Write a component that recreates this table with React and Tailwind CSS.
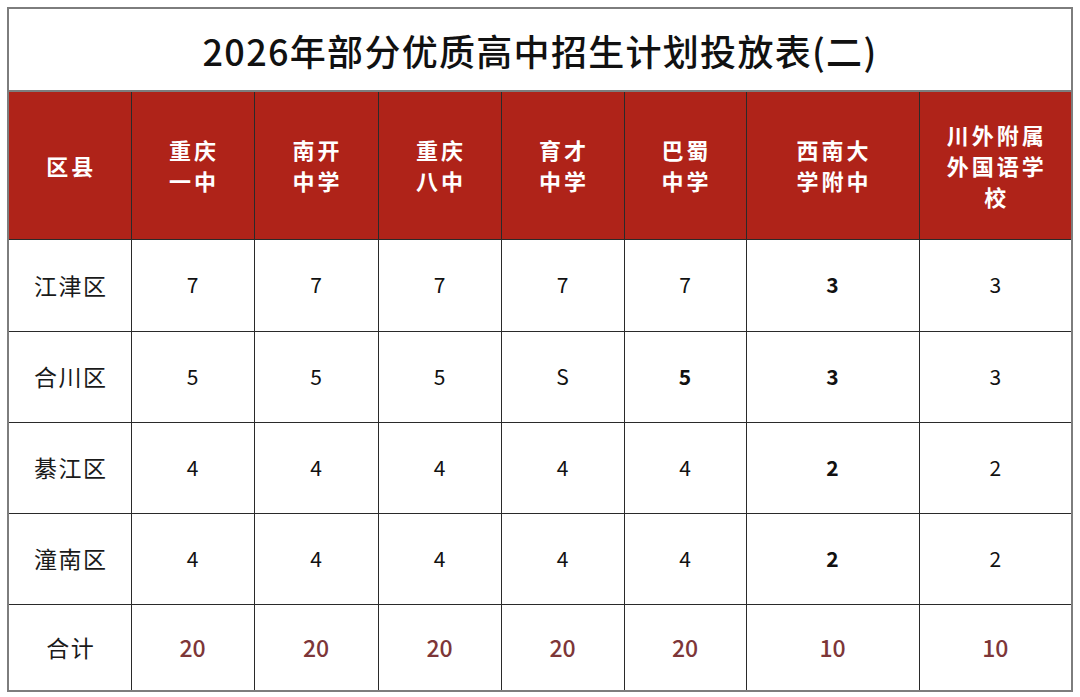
const cols = ['w-[123px]', 'w-[123px]', 'w-[124px]', 'w-[123px]', 'w-[123px]', 'w-[122px]', 'w-[173px]', 'w-[153px]'];

const heads = [
  ['区县'],
  ['重庆', '一中'],
  ['南开', '中学'],
  ['重庆', '八中'],
  ['育才', '中学'],
  ['巴蜀', '中学'],
  ['西南大', '学附中'],
  ['川外附属', '外国语学', '校'],
];

const rows = [
  { name: '江津区', h: 'h-[92px]', vals: ['7', '7', '7', '7', '7', '3', '3'], bold: [5] },
  { name: '合川区', h: 'h-[91px]', vals: ['5', '5', '5', 'S', '5', '3', '3'], bold: [4, 5] },
  { name: '綦江区', h: 'h-[91px]', vals: ['4', '4', '4', '4', '4', '2', '2'], bold: [5] },
  { name: '潼南区', h: 'h-[91px]', vals: ['4', '4', '4', '4', '4', '2', '2'], bold: [5] },
];

const totals = ['20', '20', '20', '20', '20', '10', '10'];

const cell = 'border-[1.5px] border-[#2a2a2a] text-center align-middle p-0';

export default function App() {
  return (
    <div className="w-[1080px] h-[697px] bg-white pt-[7px] pl-[7px] font-['Noto_Sans_CJK_SC',sans-serif]">
      <table className="table-fixed border-collapse w-[1065px] border-2 border-[#7d7d7d]">
        <colgroup>
          {cols.map((c, i) => (
            <col key={i} className={c} />
          ))}
        </colgroup>
        <tbody>
          <tr className="h-[83px]">
            <td colSpan={8} className="border-2 border-[#7d7d7d] text-center align-middle text-[36px] font-medium text-[#111] tracking-[1.3px]">
              2026年部分优质高中招生计划投放表(二)
            </td>
          </tr>
          <tr className="h-[148px] bg-[#af2319]">
            {heads.map((lines, i) => (
              <td key={i} className={`${cell} text-white text-[22px] font-bold leading-[31px] tracking-[3px] pl-[3px]`}>
                {lines.map((l, j) => (
                  <div key={j}>{l}</div>
                ))}
              </td>
            ))}
          </tr>
          {rows.map((r) => (
            <tr key={r.name} className={r.h}>
              <td className={`${cell} text-[23px] tracking-[1.5px] pl-[2px] text-[#1a1a1a]`}>{r.name}</td>
              {r.vals.map((v, i) => (
                <td key={i} className={`${cell} text-[21px] text-[#111] ${r.bold.includes(i) ? 'font-bold' : ''}`}>
                  {v}
                </td>
              ))}
            </tr>
          ))}
          <tr className="h-[87px]">
            <td className={`${cell} text-[23px] tracking-[1.5px] pl-[2px] text-[#1a1a1a]`}>合计</td>
            {totals.map((v, i) => (
              <td key={i} className={`${cell} text-[23px] font-medium text-[#7d3638]`}>
                {v}
              </td>
            ))}
          </tr>
        </tbody>
      </table>
    </div>
  );
}
